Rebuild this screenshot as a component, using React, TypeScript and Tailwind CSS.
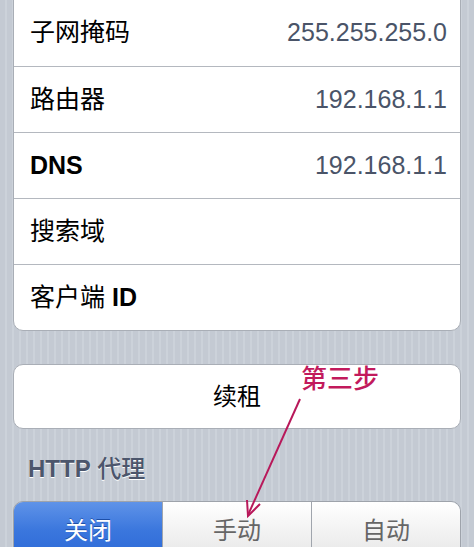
import React from "react";

const rows: { label: React.ReactNode; value?: string }[] = [
  { label: <span className="font-normal">子网掩码</span>, value: "255.255.255.0" },
  { label: <span className="font-normal">路由器</span>, value: "192.168.1.1" },
  { label: <span className="font-bold">DNS</span>, value: "192.168.1.1" },
  { label: <span className="font-normal">搜索域</span> },
  {
    label: (
      <>
        <span className="font-normal">客户端</span> <span className="font-bold">ID</span>
      </>
    ),
  },
];

export default function App() {
  return (
    <div className="relative w-[474px] h-[547px] overflow-hidden font-['Liberation_Sans','Noto_Sans_CJK_SC',sans-serif] bg-[repeating-linear-gradient(90deg,#c4cad3_0px,#c4cad3_5px,#ccd2da_5px,#ccd2da_7px)]">
      <div className="mx-[13px] -mt-px bg-white border border-[#a9aeb6] rounded-b-[10px] overflow-hidden">
        {rows.map((r, i) => (
          <div
            key={i}
            className={`h-[66px] flex items-center justify-between pl-4 pr-[13px] text-[25px] ${
              i > 0 ? "border-t border-[#b4b8bf]" : ""
            }`}
          >
            <span className="text-black">{r.label}</span>
            {r.value && <span className="text-[#4a5468]">{r.value}</span>}
          </div>
        ))}
      </div>

      <div className="mx-[13px] mt-[33px] h-[65px] bg-white border border-[#a9aeb6] rounded-[10px] flex items-center justify-center text-[24px] text-black">
        续租
      </div>

      <div className="mt-[28px] pl-[28px] text-[24px] leading-none text-[#4c566c] [text-shadow:0_1px_0_#fff]">
        <span className="font-bold">HTTP</span> <span className="font-medium">代理</span>
      </div>

      <div className="mx-[13px] mt-[20px] h-[60px] flex rounded-t-[10px] overflow-hidden border border-[#9ea3ab]">
        <div className="flex-1 flex items-center justify-center text-[24px] text-white bg-gradient-to-b from-[#5f93e8] via-[#3a76dd] to-[#2c69d7] [text-shadow:0_-1px_0_#1d4fa8]">
          关闭
        </div>
        <div className="flex-1 flex items-center justify-center text-[24px] text-[#666] border-l border-[#a0a5ad] bg-gradient-to-b from-white to-[#e6e6e6]">
          手动
        </div>
        <div className="flex-1 flex items-center justify-center text-[24px] text-[#666] border-l border-[#a0a5ad] bg-gradient-to-b from-white to-[#e6e6e6]">
          自动
        </div>
      </div>

      <div className="absolute left-[301px] top-[366px] text-[26px] font-medium leading-none text-[#c21a5c]">
        第三步
      </div>
      <svg className="absolute left-0 top-0 pointer-events-none" width="474" height="547">
        <line x1="300" y1="399" x2="248" y2="515" stroke="#b8185a" strokeWidth="2" />
        <path d="M247 500 L248 516 L260 504" fill="none" stroke="#b8185a" strokeWidth="2" />
      </svg>
    </div>
  );
}
